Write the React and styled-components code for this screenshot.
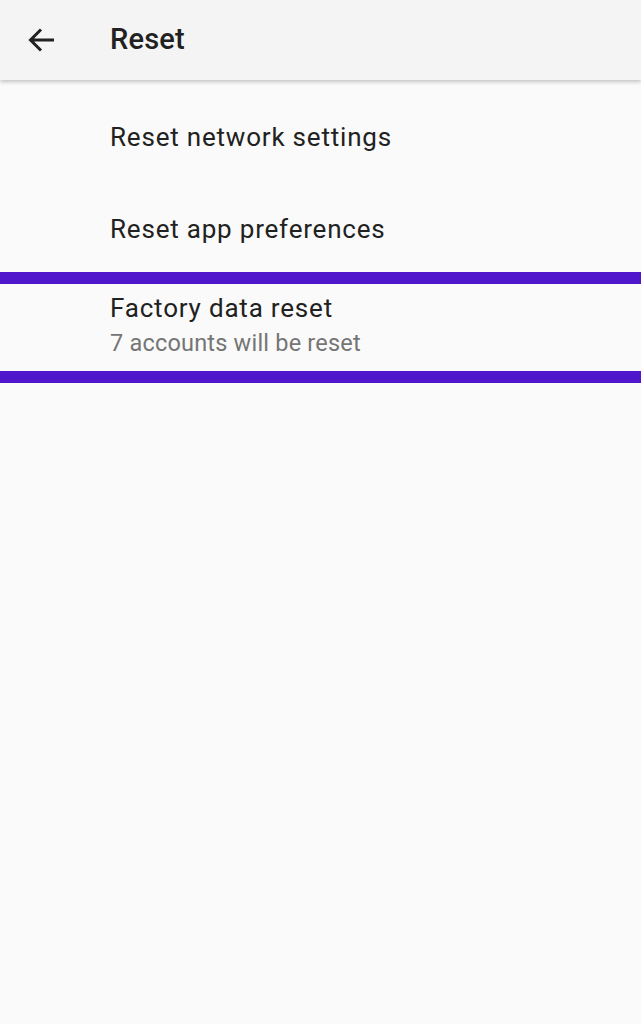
import React from 'react';
import styled, { createGlobalStyle } from 'styled-components';

const GlobalStyle = createGlobalStyle`
  html, body {
    margin: 0;
    padding: 0;
    background: #fafafa;
    font-family: Roboto, "Noto Sans", sans-serif;
  }
`;

const Page = styled.div`
  width: 641px;
  min-height: 1024px;
  background: #fafafa;
`;

const Toolbar = styled.header`
  height: 80px;
  background: #f4f4f4;
  display: flex;
  align-items: center;
  box-shadow: 0 2px 4px rgba(0, 0, 0, 0.22);
  position: relative;
  z-index: 1;
`;

const BackButton = styled.div`
  width: 110px;
  display: flex;
  align-items: center;
  padding-left: 28px;
  box-sizing: border-box;
  color: #212121;
`;

const Title = styled.h1`
  margin: 0 0 2px;
  font-size: 29px;
  font-weight: 500;
  letter-spacing: 0.2px;
  color: #212121;
`;

const List = styled.div`
  padding-top: 8px;
`;

const Row = styled.div`
  height: 92px;
  box-sizing: border-box;
  padding: 5px 0 0 110px;
  display: flex;
  flex-direction: column;
  justify-content: center;
`;

const HighlightRow = styled.div`
  height: 79px;
  padding: 8px 0 0 110px;
  display: flex;
  flex-direction: column;
  border-top: 12px solid #5016cc;
  border-bottom: 12px solid #5016cc;
`;

const RowTitle = styled.div`
  font-size: 26px;
  letter-spacing: 0.8px;
  color: #212121;
  line-height: 32px;
`;

const RowSub = styled.div`
  font-size: 23.5px;
  letter-spacing: 0.2px;
  color: #757575;
  line-height: 30px;
  margin-top: 4px;
`;

const ArrowBack = () => (
  <svg width="28" height="26" viewBox="0 0 28 26" fill="none">
    <path
      d="M26 13H3.5M13 2.5L2.5 13L13 23.5"
      stroke="currentColor"
      strokeWidth="3"
    />
  </svg>
);

export default function App() {
  return (
    <Page>
      <GlobalStyle />
      <Toolbar>
        <BackButton>
          <ArrowBack />
        </BackButton>
        <Title>Reset</Title>
      </Toolbar>
      <List>
        <Row>
          <RowTitle>Reset network settings</RowTitle>
        </Row>
        <Row>
          <RowTitle>Reset app preferences</RowTitle>
        </Row>
        <HighlightRow>
          <RowTitle>Factory data reset</RowTitle>
          <RowSub>7 accounts will be reset</RowSub>
        </HighlightRow>
      </List>
    </Page>
  );
}
